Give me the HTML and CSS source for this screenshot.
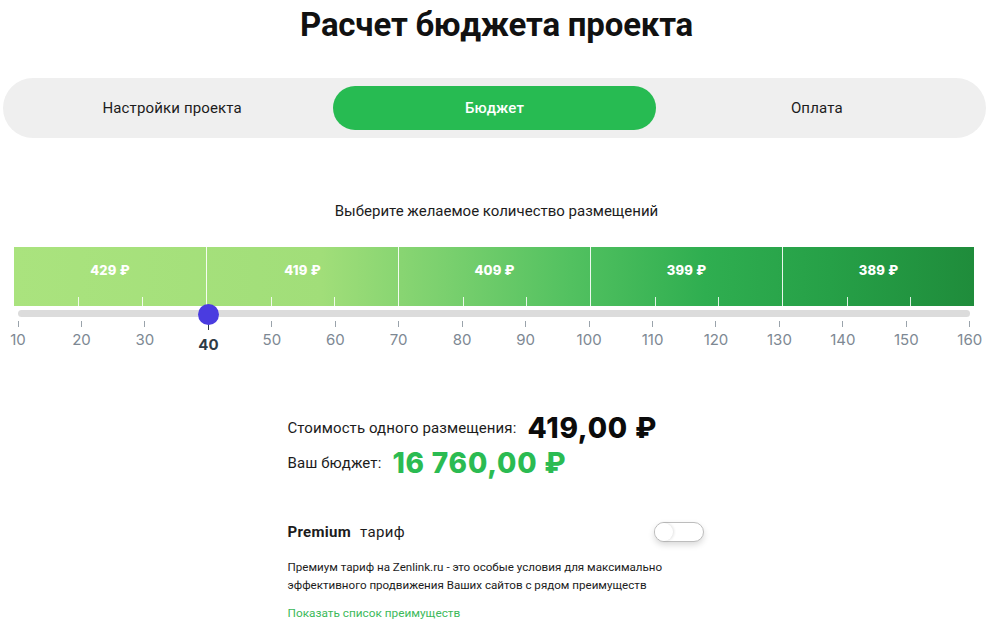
FILE: index.html
```html
<!DOCTYPE html>
<html lang="ru">
<head>
<meta charset="utf-8">
<title>Расчет бюджета проекта</title>
<link rel="stylesheet" href="styles.css">
</head>
<body>
<h1 class="title">Расчет бюджета проекта</h1>

<nav class="tabs">
  <div class="tab">Настройки проекта</div>
  <div class="tab tab-active">Бюджет</div>
  <div class="tab">Оплата</div>
</nav>

<p class="subtitle">Выберите желаемое количество размещений</p>

<section class="scale">
  <div class="prices">
    <div class="seg"><span class="price">429 ₽</span><i class="tick t1"></i><i class="tick t2"></i></div>
    <div class="seg"><span class="price">419 ₽</span><i class="tick t1"></i><i class="tick t2"></i></div>
    <div class="seg"><span class="price">409 ₽</span><i class="tick t1"></i><i class="tick t2"></i></div>
    <div class="seg"><span class="price">399 ₽</span><i class="tick t1"></i><i class="tick t2"></i></div>
    <div class="seg"><span class="price">389 ₽</span><i class="tick t1"></i><i class="tick t2"></i></div>
  </div>
  <div class="track">
    <div class="thumb" style="left: 20%"></div>
  </div>
  <div class="labels">
    <div class="lbl"><i></i><span>10</span></div>
    <div class="lbl"><i></i><span>20</span></div>
    <div class="lbl"><i></i><span>30</span></div>
    <div class="lbl lbl-active"><i></i><span>40</span></div>
    <div class="lbl"><i></i><span>50</span></div>
    <div class="lbl"><i></i><span>60</span></div>
    <div class="lbl"><i></i><span>70</span></div>
    <div class="lbl"><i></i><span>80</span></div>
    <div class="lbl"><i></i><span>90</span></div>
    <div class="lbl"><i></i><span>100</span></div>
    <div class="lbl"><i></i><span>110</span></div>
    <div class="lbl"><i></i><span>120</span></div>
    <div class="lbl"><i></i><span>130</span></div>
    <div class="lbl"><i></i><span>140</span></div>
    <div class="lbl"><i></i><span>150</span></div>
    <div class="lbl"><i></i><span>160</span></div>
  </div>
</section>

<section class="summary">
  <div class="row">
    <span class="row-label">Стоимость одного размещения:</span>
    <span class="row-value">419,00 ₽</span>
  </div>
  <div class="row">
    <span class="row-label">Ваш бюджет:</span>
    <span class="row-value green">16 760,00 ₽</span>
  </div>

  <div class="premium">
    <div class="premium-title"><b>Premium</b> тариф</div>
    <div class="toggle"><span class="knob"></span></div>
  </div>
  <p class="desc">Премиум тариф на Zenlink.ru - это особые условия для максимально эффективного продвижения Ваших сайтов с рядом преимуществ</p>
  <a class="more" href="#">Показать список преимуществ</a>
</section>
</body>
</html>
```

FILE: styles.css
```css
* { box-sizing: border-box; }

body {
  margin: 0;
  font-family: Roboto, "Liberation Sans", sans-serif;
  color: #111;
  background: #fff;
}

.title {
  margin: 6px 0 0;
  font-size: 33px;
  line-height: 38px;
  font-weight: 700;
  text-align: center;
  letter-spacing: -0.2px;
}

.tabs {
  margin: 34px 0 0 3px;
  width: 983px;
  height: 60px;
  padding: 8px;
  border-radius: 30px;
  background: #efefef;
  display: grid;
  grid-template-columns: repeat(3, 1fr);
}

.tab {
  display: flex;
  align-items: center;
  justify-content: center;
  font-size: 15px;
  letter-spacing: 0.15px;
  color: #1c1c1c;
  border-radius: 22px;
}

.tab-active {
  background: #27bb52;
  color: #fff;
  font-weight: 500;
}

.subtitle {
  margin: 63px 0 0;
  text-align: center;
  font-size: 15px;
  line-height: 20px;
  color: #1c1c1c;
}

.scale {
  margin: 26px 0 0 14px;
  width: 960px;
}

.prices {
  height: 59px;
  display: grid;
  grid-template-columns: repeat(5, 1fr);
  background: linear-gradient(90deg, #aae37e 0%, #a1de79 32%, #7ad06e 45%, #52c160 58%, #2fae50 72%, #26a047 85%, #1f8c3b 100%);
}

.seg {
  position: relative;
  border-left: 1px solid rgba(255,255,255,0.9);
  display: flex;
  justify-content: center;
  padding-top: 15px;
}

.seg:first-child { border-left: 0; }

.price {
  font-family: Inter, sans-serif;
  font-size: 13px;
  line-height: 17px;
  font-weight: 800;
  color: #fff;
  letter-spacing: 0.2px;
}

.tick {
  position: absolute;
  bottom: 0;
  width: 1px;
  height: 9px;
  background: rgba(255,255,255,0.85);
}
.t1 { left: 33.33%; }
.t2 { left: 66.66%; }

.track {
  position: relative;
  margin: 4px 4px 0;
  height: 7px;
  border-radius: 4px;
  background: #dcdcdc;
}

.thumb {
  position: absolute;
  top: 50%;
  width: 21px;
  height: 21px;
  margin: -10px 0 0 -10px;
  border-radius: 50%;
  background: #4a3ce0;
}

.labels {
  margin: 4px 4px 0;
  display: flex;
  justify-content: space-between;
}

.lbl {
  width: 0;
  display: flex;
  flex-direction: column;
  align-items: center;
}

.lbl i {
  display: block;
  width: 1px;
  height: 6px;
  background: #9aa3ab;
}

.lbl span {
  margin-top: 4px;
  font-family: Inter, sans-serif;
  font-size: 15px;
  line-height: 18px;
  color: #7d8893;
  white-space: nowrap;
}

.lbl-active i {
  height: 9px;
  background: #2e3b45;
}

.lbl-active span {
  margin-top: 6px;
  font-weight: 700;
  color: #2e3b45;
}

.summary {
  width: 418px;
  margin: 57px auto 0;
}

.row {
  display: flex;
  align-items: center;
  gap: 11px;
  height: 34px;
}

.row + .row { margin-top: 1px; }

.row-label {
  font-size: 15px;
  letter-spacing: 0.1px;
  color: #1c1c1c;
}

.row-value {
  font-family: Inter, sans-serif;
  font-size: 28px;
  font-weight: 800;
  color: #0b0b0b;
  letter-spacing: 0.8px;
}

.green { color: #2bbb52; }

.premium {
  margin-top: 42px;
  display: flex;
  align-items: center;
  justify-content: space-between;
  padding-right: 2px;
}

.premium-title {
  font-size: 15px;
  letter-spacing: 0.3px;
  color: #1c1c1c;
}

.premium-title b {
  font-weight: 700;
  margin-right: 5px;
}

.toggle {
  width: 50px;
  height: 20px;
  border-radius: 10px;
  border: 1px solid #bdbdbd;
  background: #fff;
  box-shadow: 0 3px 6px rgba(0,0,0,0.15);
  display: flex;
  align-items: center;
}

.knob {
  width: 18px;
  height: 18px;
  border-radius: 50%;
  background: #fff;
  box-shadow: 1px 0 3px rgba(0,0,0,0.12);
}

.desc {
  margin: 16px 0 0;
  font-size: 11.6px;
  line-height: 18px;
  color: #1c1c1c;
}

.more {
  display: block;
  margin-top: 10px;
  font-size: 11.8px;
  line-height: 18px;
  color: #3cb95a;
  text-decoration: none;
}
```
